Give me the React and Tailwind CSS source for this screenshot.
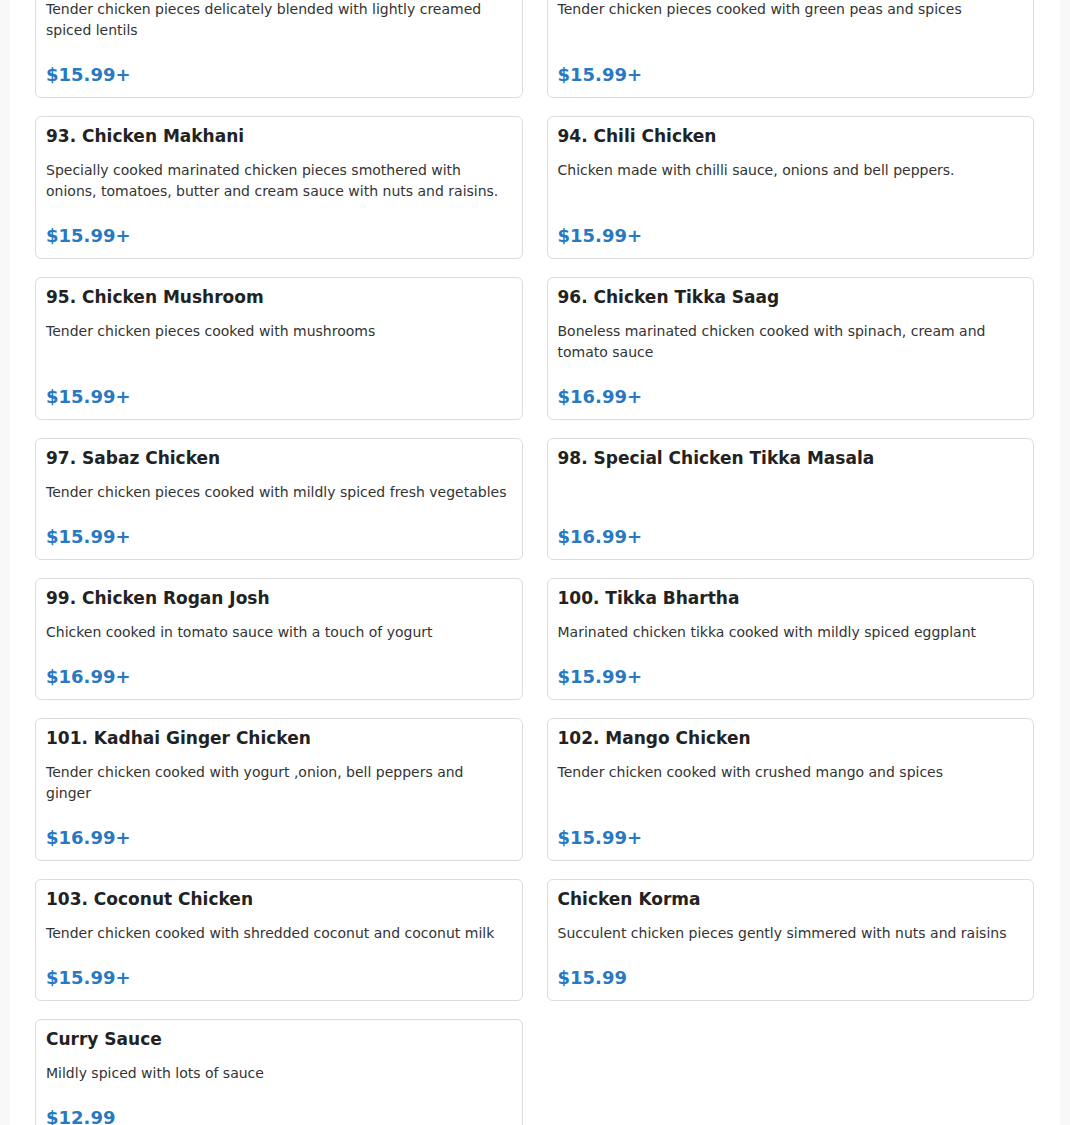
const ITEMS = [
  { name: '91. Chicken Daal', desc: 'Tender chicken pieces delicately blended with lightly creamed spiced lentils', price: '$15.99+' },
  { name: '92. Chicken Matar', desc: 'Tender chicken pieces cooked with green peas and spices', price: '$15.99+' },
  { name: '93. Chicken Makhani', desc: 'Specially cooked marinated chicken pieces smothered with onions, tomatoes, butter and cream sauce with nuts and raisins.', price: '$15.99+' },
  { name: '94. Chili Chicken', desc: 'Chicken made with chilli sauce, onions and bell peppers.', price: '$15.99+' },
  { name: '95. Chicken Mushroom', desc: 'Tender chicken pieces cooked with mushrooms', price: '$15.99+' },
  { name: '96. Chicken Tikka Saag', desc: 'Boneless marinated chicken cooked with spinach, cream and tomato sauce', price: '$16.99+' },
  { name: '97. Sabaz Chicken', desc: 'Tender chicken pieces cooked with mildly spiced fresh vegetables', price: '$15.99+' },
  { name: '98. Special Chicken Tikka Masala', desc: '', price: '$16.99+' },
  { name: '99. Chicken Rogan Josh', desc: 'Chicken cooked in tomato sauce with a touch of yogurt', price: '$16.99+' },
  { name: '100. Tikka Bhartha', desc: 'Marinated chicken tikka cooked with mildly spiced eggplant', price: '$15.99+' },
  { name: '101. Kadhai Ginger Chicken', desc: 'Tender chicken cooked with yogurt ,onion, bell peppers and ginger', price: '$16.99+' },
  { name: '102. Mango Chicken', desc: 'Tender chicken cooked with crushed mango and spices', price: '$15.99+' },
  { name: '103. Coconut Chicken', desc: 'Tender chicken cooked with shredded coconut and coconut milk', price: '$15.99+' },
  { name: 'Chicken Korma', desc: 'Succulent chicken pieces gently simmered with nuts and raisins', price: '$15.99' },
  { name: 'Curry Sauce', desc: 'Mildly spiced with lots of sauce', price: '$12.99' },
];

function MenuCard({ item }) {
  return (
    <div className="flex flex-col border border-[#dcdcdc] rounded-[6px] bg-white px-[10px] pt-[8px] pb-[11px]">
      <h3 className="text-[17px] leading-[22px] font-bold text-[#222] mb-[13px]">{item.name}</h3>
      {item.desc && (
        <p className="text-[14px] leading-[21px] text-[#333] mb-[23px]">{item.desc}</p>
      )}
      <div className="mt-auto text-[18px] leading-[22px] font-bold text-[#2878c2]">{item.price}</div>
    </div>
  );
}

export default function App() {
  return (
    <div className="min-h-screen bg-[#f8f8f8] px-[10px] overflow-hidden" style={{ fontFamily: '"DejaVu Sans", Verdana, sans-serif' }}>
      <div className="bg-white min-h-screen pl-[25px] pr-[26px]">
        <div className="-mt-[45px] grid grid-cols-2 gap-x-[24px] gap-y-[18px] pb-10">
          {ITEMS.map(item => (
            <MenuCard key={item.name} item={item} />
          ))}
        </div>
      </div>
    </div>
  );
}
